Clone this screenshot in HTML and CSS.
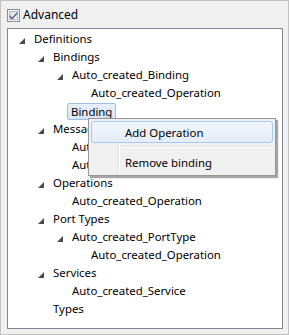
FILE: index.html
```html
<!DOCTYPE html>
<html>
<head>
<meta charset="utf-8">
<link rel="stylesheet" href="styles.css">
</head>
<body>
<div class="frame">
  <label class="check-row">
    <svg class="checkbox" width="13" height="13" viewBox="0 0 13 13">
      <defs>
        <linearGradient id="cbg" x1="0" y1="0" x2="1" y2="1">
          <stop offset="0" stop-color="#d9dbde"/>
          <stop offset="1" stop-color="#fbfbfb"/>
        </linearGradient>
      </defs>
      <rect x="0.5" y="0.5" width="12" height="12" fill="#f6f6f6" stroke="#8e8f8f"/>
      <rect x="2.5" y="2.5" width="8" height="8" fill="url(#cbg)" stroke="#b6b8bb"/>
      <path d="M2.6 6 L5.2 8.6 L10.4 2.8 L10.4 4.8 L5.2 10.6 L2.6 8 Z" fill="#4a5f8f"/>
    </svg>
    <span class="check-label">Advanced</span>
  </label>
  <div class="tree">
    <div class="row l0"><span class="arrow"></span><span class="txt">Definitions</span></div>
    <div class="row l1"><span class="arrow"></span><span class="txt">Bindings</span></div>
    <div class="row l2"><span class="arrow"></span><span class="txt">Auto_created_Binding</span></div>
    <div class="row l3"><span class="txt">Auto_created_Operation</span></div>
    <div class="row l2"><span class="txt sel">Binding</span></div>
    <div class="row l1"><span class="arrow"></span><span class="txt">Messages</span></div>
    <div class="row l2"><span class="txt">Auto_created_Message</span></div>
    <div class="row l2"><span class="txt">Auto_created_Message</span></div>
    <div class="row l1"><span class="arrow"></span><span class="txt">Operations</span></div>
    <div class="row l2"><span class="txt">Auto_created_Operation</span></div>
    <div class="row l1"><span class="arrow"></span><span class="txt">Port Types</span></div>
    <div class="row l2"><span class="arrow"></span><span class="txt">Auto_created_PortType</span></div>
    <div class="row l3"><span class="txt">Auto_created_Operation</span></div>
    <div class="row l1"><span class="arrow"></span><span class="txt">Services</span></div>
    <div class="row l2"><span class="txt">Auto_created_Service</span></div>
    <div class="row l1"><span class="txt">Types</span></div>
  </div>
  <div class="menu">
    <div class="gutter"></div>
    <div class="item hot">Add Operation</div>
    <div class="sep"></div>
    <div class="item">Remove binding</div>
  </div>
</div>
</body>
</html>
```
FILE: styles.css
```css
html, body {
  margin: 0;
  padding: 0;
}
body {
  font-family: "Noto Sans", "Open Sans", sans-serif;
  font-size: 11.4px;
  color: #000;
  background: #f0f0f0;
}
.frame {
  position: relative;
  width: 289px;
  height: 335px;
  box-sizing: border-box;
  border: 1px solid #c2c2c2;
  background: #f0f0f0;
  padding: 6px 6px 0 6px;
}
.check-row {
  display: flex;
  align-items: center;
  height: 16px;
}
.checkbox {
  display: block;
  flex: none;
}
.check-label {
  margin-left: 3px;
  line-height: 16px;
  font-size: 12px;
}
.tree {
  margin-top: 5px;
  width: 276px;
  height: 301px;
  box-sizing: border-box;
  border: 1px solid #828790;
  background: #fff;
  padding-top: 1px;
  overflow: hidden;
}
.row {
  position: relative;
  height: 18px;
  display: flex;
  align-items: center;
  white-space: nowrap;
}
.l0 { padding-left: 25px; }
.l1 { padding-left: 44px; }
.l2 { padding-left: 63px; }
.l3 { padding-left: 82px; }
.arrow {
  position: absolute;
  width: 0;
  height: 0;
  border-left: 6px solid transparent;
  border-bottom: 6px solid #4a4a4a;
  margin-left: -14px;
  top: 8px;
}
.txt {
  line-height: 16px;
  padding: 0 1px;
}
.sel {
  margin-left: -4px;
  padding: 0 3px;
  border: 1px solid #9ebde4;
  border-radius: 2px;
  background: linear-gradient(#e7f0fb, #d6e5f7);
  line-height: 15px;
}
.menu {
  position: absolute;
  left: 87px;
  top: 117px;
  width: 188px;
  height: 58px;
  box-sizing: border-box;
  border: 1px solid #979797;
  background: #f0f0f0;
  padding: 2px 2px;
  box-shadow: 2px 2px 1px rgba(0, 0, 0, 0.35);
}
.gutter {
  position: absolute;
  left: 29px;
  top: 2px;
  bottom: 2px;
  width: 1px;
  background: #e2e3e3;
  border-right: 1px solid #fff;
}
.item {
  position: relative;
  height: 22px;
  line-height: 22px;
  padding-left: 33px;
  box-sizing: border-box;
  border: 1px solid transparent;
  border-radius: 3px;
}
.hot {
  border-color: #a8c8ee;
  background: linear-gradient(#f1f6fd, #e4edf9);
}
.sep {
  position: relative;
  margin: 3px 0 3px 30px;
  height: 1px;
  background: #e0e0e0;
  border-bottom: 1px solid #fff;
}
```
